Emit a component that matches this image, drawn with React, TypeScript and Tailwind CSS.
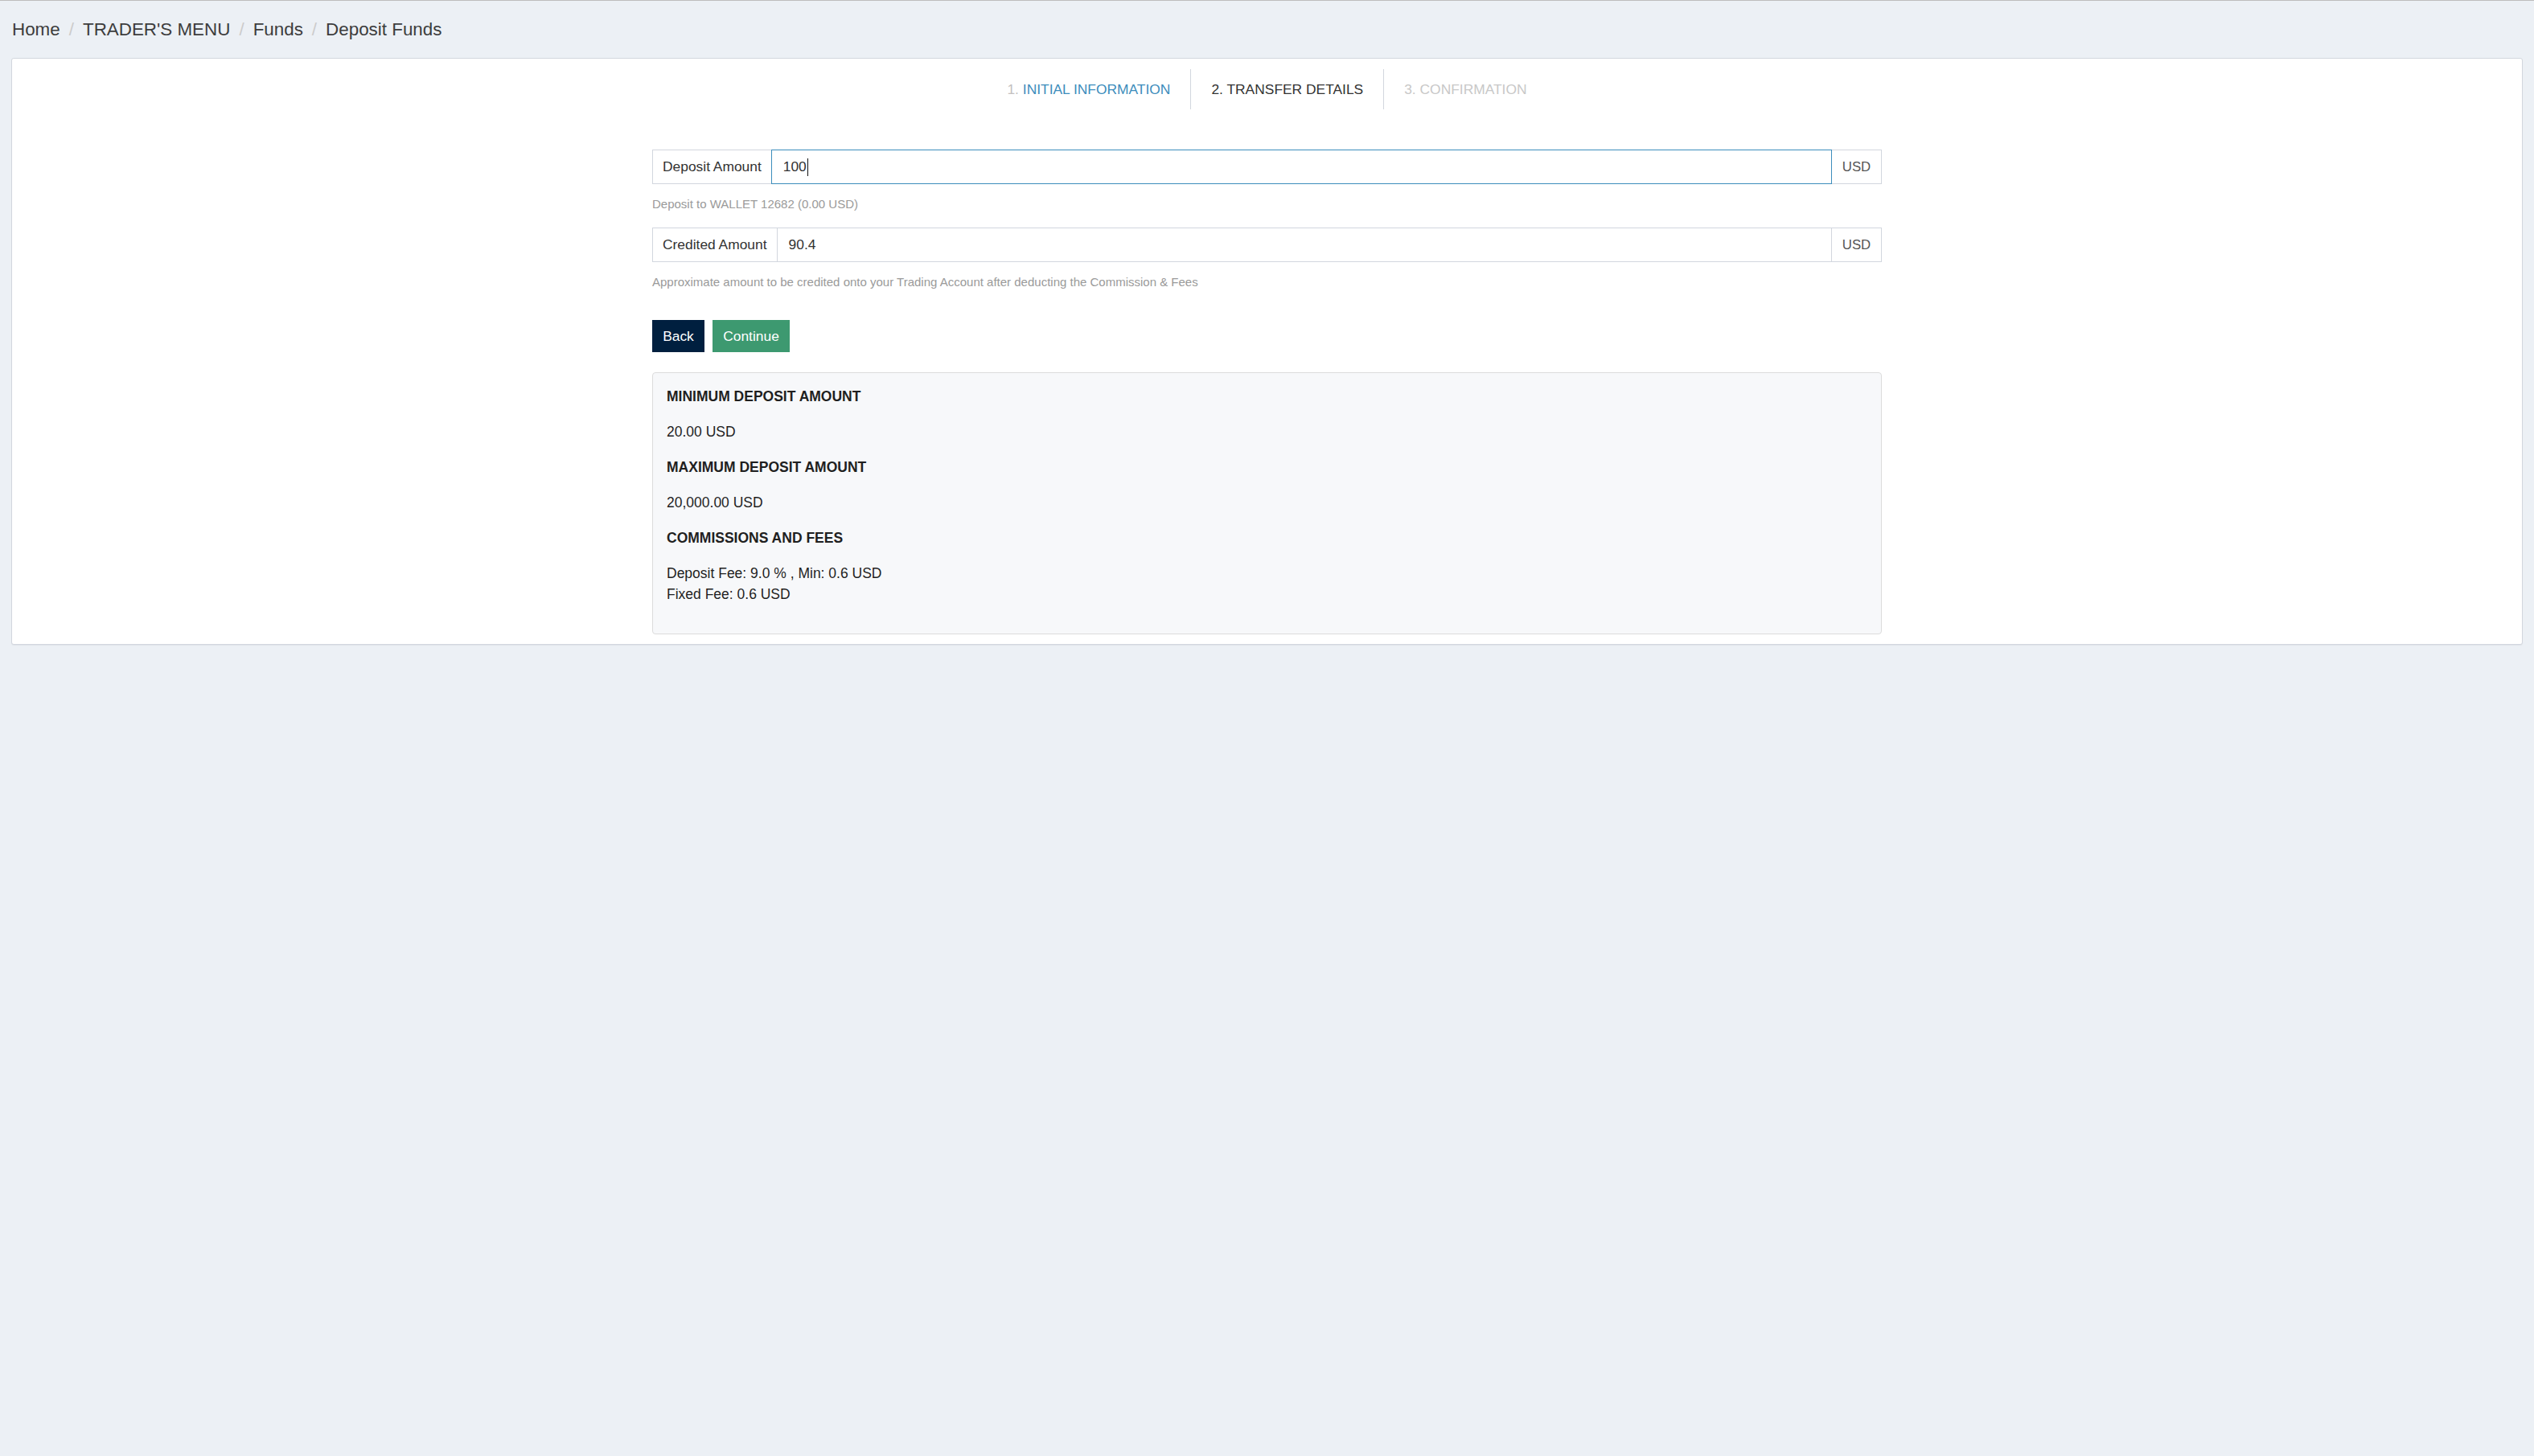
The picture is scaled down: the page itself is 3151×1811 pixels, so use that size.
const steps = [
  { num: "1.", label: "INITIAL INFORMATION", state: "done" },
  { num: "2.", label: "TRANSFER DETAILS", state: "current" },
  { num: "3.", label: "CONFIRMATION", state: "todo" },
] as const;

const crumbs = ["Home", "TRADER'S MENU", "Funds", "Deposit Funds"];

function Breadcrumb() {
  return (
    <nav className="flex items-center pl-[15px] pt-[21px] text-[22.4px] leading-[30px] text-[#3d3d3d]">
      {crumbs.map((c, i) => (
        <span key={c} className="flex items-center">
          {i > 0 ? <span className="px-[11px] text-[#cccccc]">/</span> : null}
          <span>{c}</span>
        </span>
      ))}
    </nav>
  );
}

function Steps() {
  return (
    <ul className="flex justify-center text-[17.4px] leading-[50px]">
      {steps.map((s, i) => (
        <li
          key={s.label}
          className={
            "h-[50px] px-[25px] " +
            (i > 0 ? "border-l border-[#d2d6de] " : "") +
            (s.state === "current" ? "text-[#333333]" : s.state === "todo" ? "text-[#c8c8c8]" : "text-[#3c8dbc]")
          }
        >
          {s.state === "done" ? (
            <>
              <span className="text-[#c4c0c0]">{s.num}</span> {s.label}
            </>
          ) : (
            <>
              {s.num} {s.label}
            </>
          )}
        </li>
      ))}
    </ul>
  );
}

function AmountGroup({
  label,
  value,
  focused,
}: {
  label: string;
  value: string;
  focused?: boolean;
}) {
  return (
    <div className="flex h-[43px] text-[17.4px] text-[#333333]">
      <div className="flex items-center border border-r-0 border-[#d2d6de] bg-white px-[12px]">
        {label}
      </div>
      <div
        className={
          "flex flex-1 items-center border px-[14px] " +
          (focused ? "border-[#3c8dbc]" : "border-[#d2d6de]")
        }
      >
        <span>{value}</span>
        {focused ? <span className="ml-px h-[22px] w-px bg-[#111111]" /> : null}
      </div>
      <div className="flex w-[62px] items-center justify-center border border-l-0 border-[#d2d6de] bg-white text-[16.8px] text-[#555555]">
        USD
      </div>
    </div>
  );
}

function InfoBox() {
  return (
    <div className="rounded-[4px] border border-[#dcdcdc] bg-[#f7f8fa] px-[17px] pb-[18px] pt-[16px] text-[17.5px] leading-[26px] text-[#1f1f1f]">
      <p className="mb-[18px] font-bold">MINIMUM DEPOSIT AMOUNT</p>
      <p className="mb-[18px]">20.00 USD</p>
      <p className="mb-[18px] font-bold">MAXIMUM DEPOSIT AMOUNT</p>
      <p className="mb-[18px]">20,000.00 USD</p>
      <p className="mb-[18px] font-bold">COMMISSIONS AND FEES</p>
      <p className="mb-[18px]">
        Deposit Fee: 9.0 % , Min: 0.6 USD
        <br />
        Fixed Fee: 0.6 USD
      </p>
    </div>
  );
}

export default function App() {
  return (
    <div
      className="min-h-screen border-t border-[#bdbdbd] bg-[#ecf0f5]"
      style={{ fontFamily: '"Liberation Sans", Arial, sans-serif' }}
    >
      <Breadcrumb />
      <section className="mx-[14px] mt-[20px] rounded-[3px] border border-[#d2d6de] bg-white pb-[12px] pt-[13px] shadow-[0_1px_1px_rgba(0,0,0,0.05)]">
        <Steps />
        <div className="mx-auto mt-[50px] w-[1529px]">
          <AmountGroup label="Deposit Amount" value="100" focused />
          <p className="mt-[14px] text-[15px] leading-[21px] text-[#9a9a9a]">
            Deposit to WALLET 12682 (0.00 USD)
          </p>
          <div className="mt-[19px]">
            <AmountGroup label="Credited Amount" value="90.4" />
          </div>
          <p className="mt-[14px] text-[15px] leading-[21px] text-[#9a9a9a]">
            Approximate amount to be credited onto your Trading Account after deducting the Commission &amp; Fees
          </p>
          <div className="mt-[37px] flex gap-[10px] text-[17.4px] text-white">
            <button className="h-[40px] w-[65px] bg-[#001f3f]">Back</button>
            <button className="h-[40px] w-[96px] bg-[#3d9970]">Continue</button>
          </div>
          <div className="mt-[25px]">
            <InfoBox />
          </div>
        </div>
      </section>
    </div>
  );
}
